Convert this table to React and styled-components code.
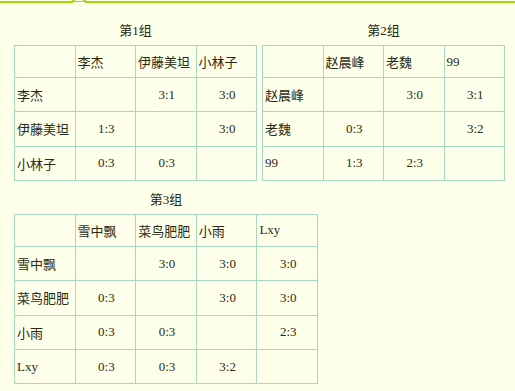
import React from "react";
import styled, { createGlobalStyle } from "styled-components";

const GlobalStyle = createGlobalStyle`
  html, body {
    margin: 0;
    padding: 0;
    background: #fdffeb;
  }
  body {
    font-family: "Liberation Serif", "Noto Sans CJK SC", serif;
    font-size: 13px;
    color: #2a2a10;
  }
`;

const Page = styled.div`
  width: 515px;
  min-height: 391px;
  background: #fdffeb;
  padding-top: 1px;
  box-sizing: border-box;
`;

const TopBar = styled.div`
  position: relative;
  height: 2px;
  background: #a3d80a;
`;

const Notch = styled.svg`
  position: absolute;
  left: 72px;
  top: -6px;
  width: 14px;
  height: 9px;
  overflow: visible;
`;

const Groups = styled.div`
  display: flex;
  flex-wrap: wrap;
  column-gap: 5px;
  row-gap: 5px;
  padding: 14px 0 0 14px;
`;

const Group = styled.div`
  display: flex;
  flex-direction: column;
`;

const Caption = styled.div`
  height: 28px;
  line-height: 28px;
  text-align: center;
`;

const Table = styled.table`
  border-collapse: collapse;
  table-layout: fixed;
  width: ${({ $cols }) => Math.round($cols * 60.75)}px;
`;

const Row = styled.tr`
  height: ${({ $head }) => ($head ? "32px" : "34.34px")};
`;

const Cell = styled.td`
  border: 1px solid #a8d9c0;
  padding: 0 0 0 2px;
  vertical-align: middle;
  text-align: ${({ $center }) => ($center ? "center" : "left")};
  white-space: nowrap;
  overflow: hidden;
`;

const groups = [
  {
    title: "第1组",
    players: ["李杰", "伊藤美坦", "小林子"],
    scores: [
      ["", "3:1", "3:0"],
      ["1:3", "", "3:0"],
      ["0:3", "0:3", ""],
    ],
  },
  {
    title: "第2组",
    players: ["赵晨峰", "老魏", "99"],
    scores: [
      ["", "3:0", "3:1"],
      ["0:3", "", "3:2"],
      ["1:3", "2:3", ""],
    ],
  },
  {
    title: "第3组",
    players: ["雪中飘", "菜鸟肥肥", "小雨", "Lxy"],
    scores: [
      ["", "3:0", "3:0", "3:0"],
      ["0:3", "", "3:0", "3:0"],
      ["0:3", "0:3", "", "2:3"],
      ["0:3", "0:3", "3:2", ""],
    ],
  },
];

const GroupTable = ({ group }) => (
  <Group>
    <Caption>{group.title}</Caption>
    <Table $cols={group.players.length + 1}>
      <tbody>
        <Row $head>
          <Cell />
          {group.players.map((p) => (
            <Cell key={p}>{p}</Cell>
          ))}
        </Row>
        {group.players.map((p, i) => (
          <Row key={p}>
            <Cell>{p}</Cell>
            {group.scores[i].map((s, j) => (
              <Cell $center key={j}>
                {s}
              </Cell>
            ))}
          </Row>
        ))}
      </tbody>
    </Table>
  </Group>
);

const App = () => {
  return (
    <Page>
      <GlobalStyle />
      <TopBar>
        <Notch viewBox="0 0 14 9">
          <polygon points="0,7 7,0 14,7" fill="#fdffeb" stroke="#a3d80a" strokeWidth="2" />
          <rect x="1" y="7" width="12" height="2" fill="#fdffeb" />
        </Notch>
      </TopBar>
      <Groups>
        {groups.map((g) => (
          <GroupTable group={g} key={g.title} />
        ))}
      </Groups>
    </Page>
  );
};

export default App;
